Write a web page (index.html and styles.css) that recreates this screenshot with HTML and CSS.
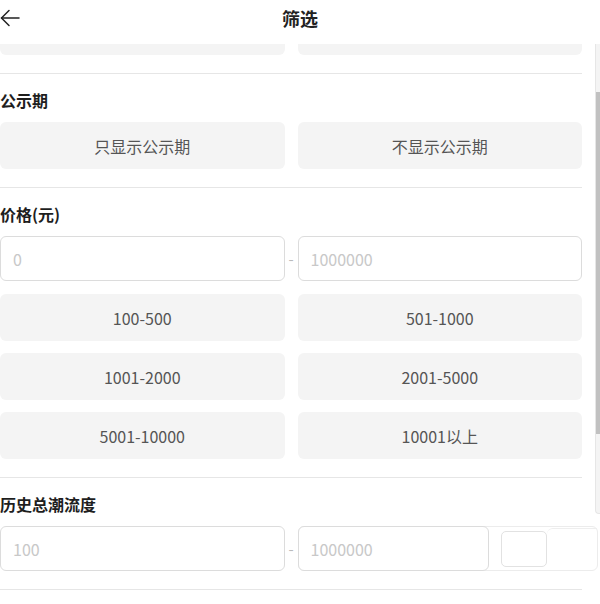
FILE: index.html
```html
<!DOCTYPE html>
<html lang="zh-CN">
<head>
<meta charset="utf-8">
<title>筛选</title>
<link rel="stylesheet" href="styles.css">
</head>
<body>
<div class="page">
  <header class="topbar">
    <button class="back" aria-label="返回">
      <svg width="20" height="20" viewBox="0 0 20 20" fill="none" stroke="#222" stroke-width="1.5" stroke-linecap="round" stroke-linejoin="round">
        <path d="M19 10H1.5"/>
        <path d="M9 2.5L1.5 10L9 17.5"/>
      </svg>
    </button>
    <h1 class="title">筛选</h1>
  </header>
  <div class="body-wrap">
    <div class="scroll" id="scroll">
      <section class="group">
        <div class="label">状态</div>
        <div class="options">
          <div class="option">在售</div>
          <div class="option">已售罄</div>
        </div>
      </section>
      <section class="group">
        <div class="label">公示期</div>
        <div class="options">
          <div class="option">只显示公示期</div>
          <div class="option">不显示公示期</div>
        </div>
      </section>
      <section class="group">
        <div class="label">价格(元)</div>
        <div class="range">
          <input class="field" placeholder="0">
          <span class="dash">-</span>
          <input class="field" placeholder="1000000">
        </div>
        <div class="options">
          <div class="option">100-500</div>
          <div class="option">501-1000</div>
          <div class="option">1001-2000</div>
          <div class="option">2001-5000</div>
          <div class="option">5001-10000</div>
          <div class="option">10001以上</div>
        </div>
      </section>
      <section class="group">
        <div class="label">历史总潮流度</div>
        <div class="range range-extra">
          <input class="field" placeholder="100">
          <span class="dash">-</span>
          <div class="field-wrap">
            <input class="field field-short" placeholder="1000000">
            <span class="ghost-box"></span>
            <span class="ghost-fade"></span>
          </div>
        </div>
      </section>
      <section class="group">
        <div class="label">发行时间</div>
        <div class="options">
          <div class="option">近一周</div>
          <div class="option">近一月</div>
          <div class="option">近三月</div>
          <div class="option">更早</div>
        </div>
      </section>
    </div>
    <div class="scrollbar" aria-hidden="true"><span class="thumb"></span></div>
  </div>
</div>
<script src="script.js"></script>
</body>
</html>
```

FILE: styles.css
```css
* { box-sizing: border-box; }
html, body {
  margin: 0;
  padding: 0;
  background: #fff;
}
body {
  font-family: "Noto Sans CJK SC", "Microsoft YaHei", sans-serif;
  color: #222;
  width: 600px;
  height: 604px;
  overflow: hidden;
}
.page {
  display: flex;
  flex-direction: column;
  height: 604px;
}
.topbar {
  height: 44px;
  flex: none;
  display: flex;
  align-items: flex-start;
  justify-content: center;
  padding-top: 6px;
  position: relative;
}
.back {
  position: absolute;
  left: 0;
  top: 8px;
  padding: 0;
  border: 0;
  background: none;
  width: 20px;
  height: 20px;
  display: block;
}
.back svg { display: block; }
.title {
  margin: 0;
  font-size: 18px;
  line-height: 24px;
  font-weight: 700;
  color: #222;
}
.body-wrap {
  flex: 1;
  position: relative;
  min-height: 0;
}
.scroll {
  height: 100%;
  overflow: hidden;
  padding-bottom: 120px;
}
.scrollbar {
  position: absolute;
  top: 0;
  right: 0;
  width: 5px;
  height: 470px;
  background: #f4f4f4;
  border-left: 1px solid #e6e6e6;
  border-bottom: 1px solid #e6e6e6;
  border-bottom-left-radius: 4px;
}
.thumb {
  display: block;
  margin-top: 48px;
  width: 4px;
  height: 342px;
  background: #c1c1c1;
}
.group {
  margin-right: 18px;
  padding: 16px 0 18px;
  border-bottom: 1px solid #e6e6e6;
}
.label {
  font-size: 16px;
  line-height: 20px;
  font-weight: 700;
  color: #1e1e1e;
  margin-bottom: 12px;
}
.options {
  display: grid;
  grid-template-columns: 1fr 1fr;
  column-gap: 13px;
  row-gap: 12px;
}
.option {
  height: 47px;
  border-radius: 6px;
  background: #f4f4f4;
  display: flex;
  align-items: center;
  justify-content: center;
  font-size: 16px;
  color: #555;
}
.range {
  display: grid;
  grid-template-columns: 1fr 13px 1fr;
  height: 45px;
  margin-bottom: 13px;
}
.range-extra { margin-bottom: 0; }
.dash {
  display: flex;
  align-items: center;
  justify-content: center;
  color: #bbb;
  font-size: 15px;
}
.field {
  width: 100%;
  height: 45px;
  border: 1px solid #dcdcdc;
  border-radius: 6px;
  padding: 0 12px;
  font-family: inherit;
  font-size: 16px;
  color: #333;
  background: #fff;
  outline: none;
}
.field::placeholder { color: #c8c8c8; }
.field-wrap {
  display: flex;
  align-items: center;
  height: 45px;
  margin-right: -16px;
  border: 1px solid #ececec;
  border-radius: 6px;
}
.field-short {
  flex: none;
  width: 191px;
  margin: -1px 0 -1px -1px;
}
.ghost-box {
  flex: none;
  width: 46px;
  height: 36px;
  margin-left: 12px;
  border: 1px solid #e2e2e2;
  border-radius: 5px;
}
.ghost-fade {
  flex: 1;
  height: 36px;
  margin-top: -6px;
  border-top: 1px solid #eee;
  border-radius: 6px 0 0 0;
}
```

FILE: script.js
```js
document.getElementById('scroll').scrollTop = 84;
```
